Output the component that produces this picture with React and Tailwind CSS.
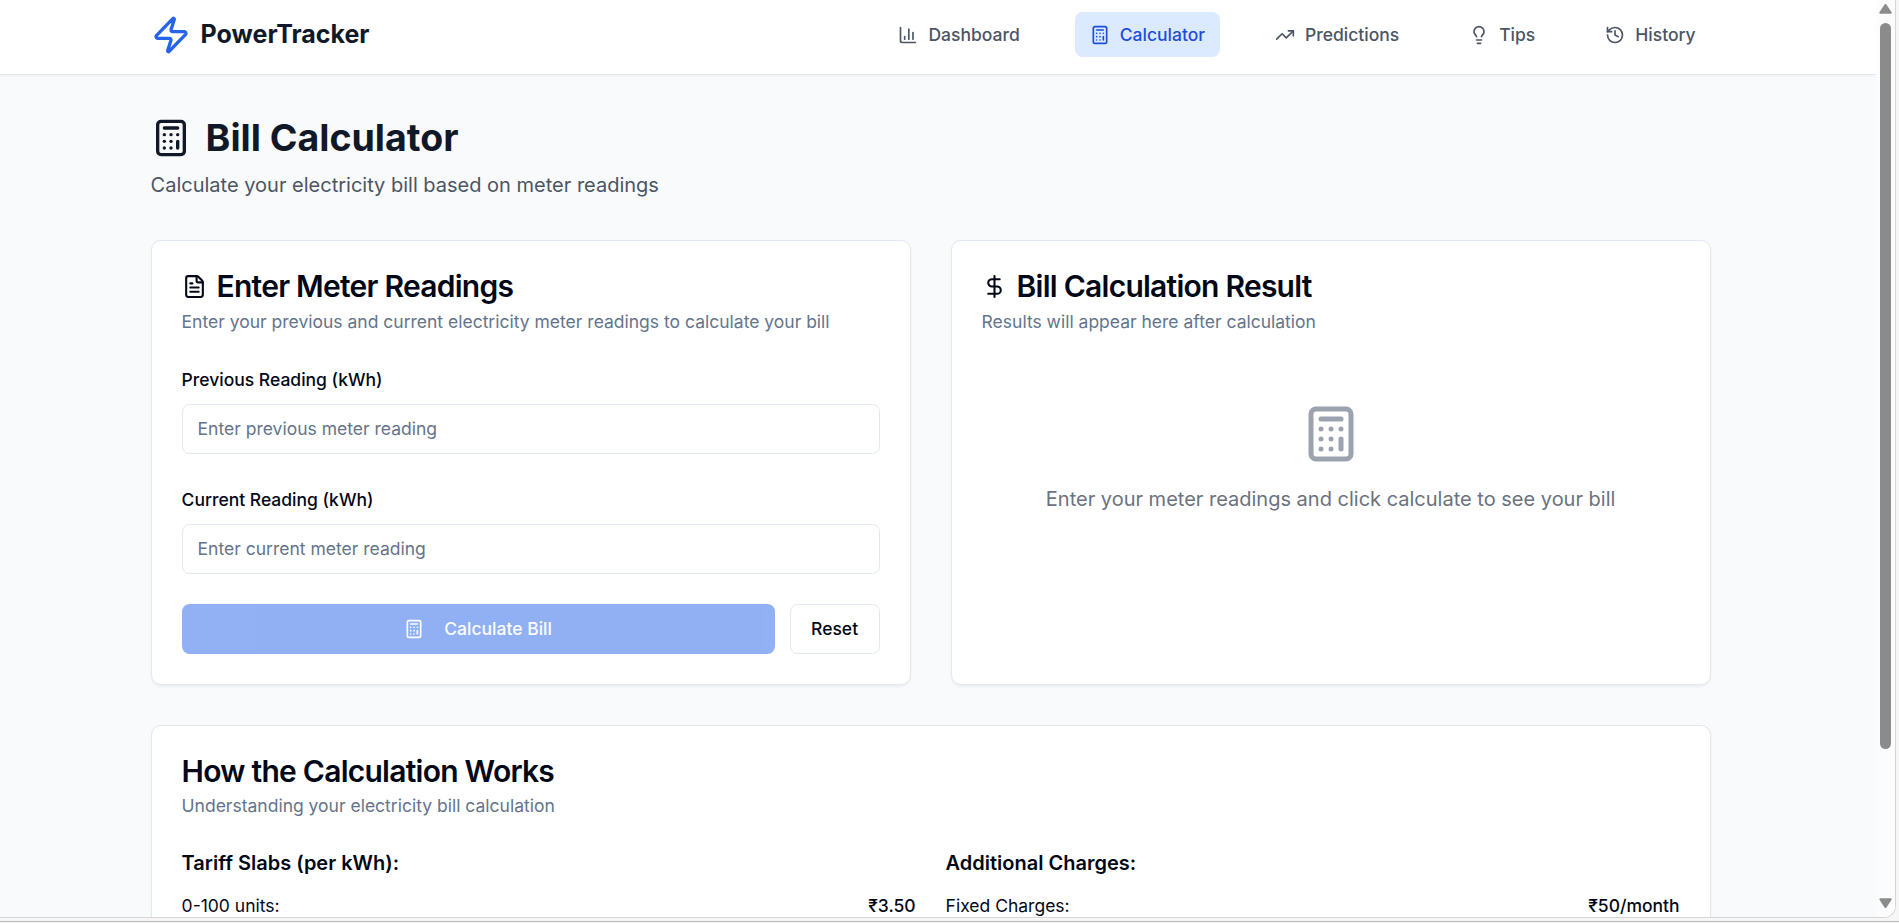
import {
  Calculator,
  ChartColumn,
  DollarSign,
  FileText,
  History,
  Lightbulb,
  TrendingUp,
  Zap,
} from "lucide-react";

const navItems = [
  { label: "Dashboard", icon: ChartColumn },
  { label: "Calculator", icon: Calculator, active: true },
  { label: "Predictions", icon: TrendingUp },
  { label: "Tips", icon: Lightbulb },
  { label: "History", icon: History },
];

function Header() {
  return (
    <header className="relative h-[60px] shrink-0 border-b border-[#e2e8f0] bg-white shadow-[0_1px_2px_0_rgb(0_0_0/0.05)]">
      <div className="ml-[120.48px] flex h-[55.2px] w-[1248px] items-center justify-between">
        <div className="flex items-center gap-2">
          <Zap className="h-8 w-8 text-[#2563eb]" />
          <span className="text-xl font-bold text-[#111827]">PowerTracker</span>
        </div>
        <nav className="flex gap-8">
          {navItems.map(({ label, icon: Icon, active }) => (
            <a
              key={label}
              className={
                "flex items-center gap-2 rounded-md px-3 py-2 text-sm font-medium " +
                (active ? "bg-[#dbeafe] text-[#1d4ed8]" : "text-[#4b5563]")
              }
            >
              <Icon className="h-4 w-4" />
              <span>{label}</span>
            </a>
          ))}
        </nav>
      </div>
    </header>
  );
}

function Card({ title, icon: Icon, description, children }) {
  return (
    <section className="rounded-lg border border-[#e2e8f0] bg-white text-[#020817] shadow-[0_1px_2px_0_rgb(0_0_0/0.05)]">
      <div className="flex flex-col gap-1.5 p-6">
        <h3 className="flex items-center text-2xl leading-none font-semibold tracking-tight">
          {Icon && <Icon className="mr-2 h-5 w-5" />}
          {title}
        </h3>
        <p className="text-sm text-[#64748b]">{description}</p>
      </div>
      <div className="p-6 pt-0">{children}</div>
    </section>
  );
}

function Field({ label, placeholder }) {
  return (
    <div className="flex flex-col gap-2">
      <label className="h-6 pt-[0.8px] text-sm leading-6 font-medium">{label}</label>
      <input
        className="h-10 w-full rounded-md border border-[#e2e8f0] bg-white px-3 text-sm placeholder:text-[#64748b]"
        placeholder={placeholder}
      />
    </div>
  );
}

function PriceList({ title, label, value }) {
  return (
    <div>
      <h4 className="mb-3 font-semibold">{title}</h4>
      <div className="flex justify-between text-sm">
        <span>{label}</span>
        <span className="font-medium">{value}</span>
      </div>
    </div>
  );
}

function Scrollbar() {
  return (
    <div className="flex w-[19px] shrink-0 flex-col items-center bg-[#fcfcfc]">
      <svg className="mt-1 h-[10px] w-[13px]" viewBox="0 0 13 10" fill="#8b8b8b">
        <path d="M5.6.6a1.1 1.1 0 0 1 1.8 0l5 7.4a1.1 1.1 0 0 1-.9 1.8h-10A1.1 1.1 0 0 1 .6 8z" />
      </svg>
      <div className="mt-[9px] h-[726px] w-[11px] rounded-full bg-[#8b8b8b]" />
      <svg className="mt-auto mb-[9px] h-[10px] w-[13px] rotate-180" viewBox="0 0 13 10" fill="#8b8b8b">
        <path d="M5.6.6a1.1 1.1 0 0 1 1.8 0l5 7.4a1.1 1.1 0 0 1-.9 1.8h-10A1.1 1.1 0 0 1 .6 8z" />
      </svg>
    </div>
  );
}

export default function App() {
  return (
    <div className="flex h-[923px] w-full flex-col overflow-hidden bg-[#f6f6f6] font-[Inter,sans-serif]">
      <div className="mr-[3px] flex h-[918px] shrink-0 overflow-hidden rounded-br-[12px] border-r border-b border-[#d6d6d6] bg-[#f9fafb]">
        <div className="h-[917px] w-[1876px] shrink-0 overflow-hidden">
          <div className="[zoom:1.25]">
            <Header />
            <main className="ml-[120.48px] w-[1248px] py-8">
              <div className="mb-8">
                <h1 className="flex items-center text-3xl font-bold text-[#111827]">
                  <Calculator className="mr-3 h-8 w-8" />
                  Bill Calculator
                </h1>
                <p className="mt-2 text-[#4b5563]">
                  Calculate your electricity bill based on meter readings
                </p>
              </div>

              <div className="grid grid-cols-2 gap-8">
                <Card
                  title="Enter Meter Readings"
                  icon={FileText}
                  description="Enter your previous and current electricity meter readings to calculate your bill"
                >
                  <div className="flex flex-col gap-6">
                    <Field label="Previous Reading (kWh)" placeholder="Enter previous meter reading" />
                    <Field label="Current Reading (kWh)" placeholder="Enter current meter reading" />
                    <div className="flex gap-3">
                      <button
                        disabled
                        className="flex h-10 flex-1 items-center justify-center gap-4 rounded-md bg-[#2563eb] text-sm font-medium text-[#f8fafc] opacity-50"
                      >
                        <Calculator className="h-4 w-4" />
                        Calculate Bill
                      </button>
                      <button className="flex h-10 items-center rounded-md border border-[#e2e8f0] bg-white px-[16.4px] text-sm font-medium">
                        Reset
                      </button>
                    </div>
                  </div>
                </Card>

                <Card
                  title="Bill Calculation Result"
                  icon={DollarSign}
                  description="Results will appear here after calculation"
                >
                  <div className="flex flex-col items-center py-8">
                    <Calculator className="mb-4 h-12 w-12 text-[#9ca3af]" />
                    <p className="text-[#6b7280]">
                      Enter your meter readings and click calculate to see your bill
                    </p>
                  </div>
                </Card>
              </div>

              <div className="mt-8">
                <Card
                  title="How the Calculation Works"
                  description="Understanding your electricity bill calculation"
                >
                  <div className="grid grid-cols-2 gap-6">
                    <PriceList title="Tariff Slabs (per kWh):" label="0-100 units:" value="₹3.50" />
                    <PriceList title="Additional Charges:" label="Fixed Charges:" value="₹50/month" />
                  </div>
                </Card>
              </div>
            </main>
          </div>
        </div>
        <Scrollbar />
      </div>
      <div className="mt-[3px] h-px shrink-0 bg-[#b9bbba]" />
    </div>
  );
}
